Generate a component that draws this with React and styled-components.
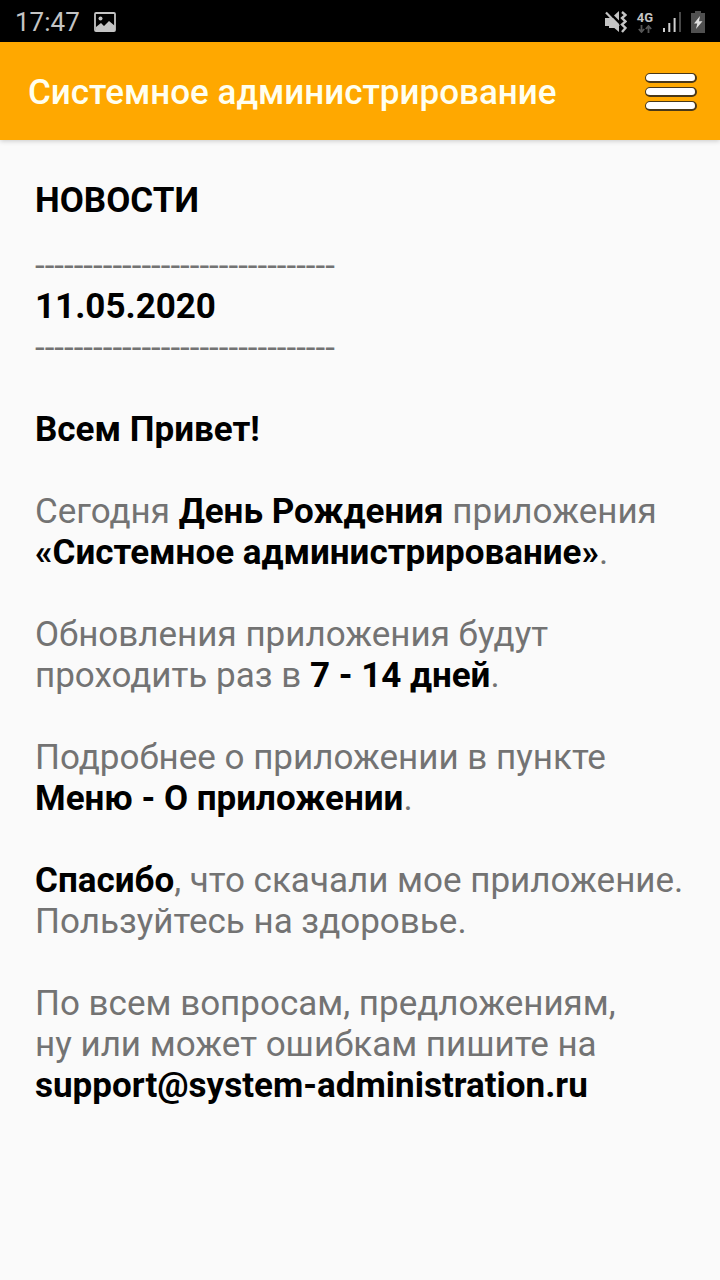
import React from "react";
import styled, { createGlobalStyle } from "styled-components";

const DIVIDER = "-".repeat(31);

const App = () => {
  return (
    <>
      <GlobalStyle />
      <StatusBar>
        <StatusGroup>
          <Clock>17:47</Clock>
          <PictureIcon />
        </StatusGroup>
        <StatusGroup>
          <MuteIcon />
          <NetworkIcon />
          <SignalIcon />
          <BatteryIcon />
        </StatusGroup>
      </StatusBar>
      <Header>
        <Title>Системное администрирование</Title>
        <MenuButton type="button" aria-label="Меню">
          <MenuLine />
          <MenuLine />
          <MenuLine />
        </MenuButton>
      </Header>
      <Content>
        <Heading>НОВОСТИ</Heading>
        <DateBlock>
          <div>{DIVIDER}</div>
          <strong>11.05.2020</strong>
          <div>{DIVIDER}</div>
        </DateBlock>
        <Text>
          <strong>Всем Привет!</strong>
        </Text>
        <Text>
          Сегодня <strong>День Рождения</strong> приложения
          <br />
          <strong>«Системное администрирование»</strong>.
        </Text>
        <Text>
          Обновления приложения будут
          <br />
          проходить раз в <strong>7 - 14 дней</strong>.
        </Text>
        <Text>
          Подробнее о приложении в пункте
          <br />
          <strong>Меню - О приложении</strong>.
        </Text>
        <Text>
          <strong>Спасибо</strong>, что скачали мое приложение.
          <br />
          Пользуйтесь на здоровье.
        </Text>
        <Text>
          По всем вопросам, предложениям,
          <br />
          ну или может ошибкам пишите на
          <br />
          <MailLink href="mailto:support@system-administration.ru">
            support@system-administration.ru
          </MailLink>
        </Text>
      </Content>
    </>
  );
};

export default App;

const PictureIcon = () => (
  <svg width="22" height="20" viewBox="0 0 22 20" aria-hidden="true">
    <rect x="1" y="1" width="20" height="18" rx="1" fill="none" stroke="#c4c4c4" strokeWidth="1.8" />
    <circle cx="6.5" cy="6.5" r="2" fill="#c4c4c4" />
    <path d="M2 15l5-4 3 3 5-5 6 5v5H2z" fill="#c4c4c4" />
  </svg>
);

const MuteIcon = () => (
  <svg width="22" height="22" viewBox="0 0 22 22" aria-hidden="true">
    <path d="M0 7h4l10 9v5l-7-6H0z" fill="#c4c4c4" />
    <path d="M1 1.500l13 13.500" stroke="#c4c4c4" strokeWidth="2.200" />
    <path d="M4 7h4l6 6v4H4z" fill="#c4c4c4" />
    <path d="M9 4.500L14 0v9.500z" fill="#c4c4c4" />
    <path d="M17 1l3.500 3-3.500 3 3.500 3.500-3.500 3 3.500 3.500-3.500 4" fill="none" stroke="#c4c4c4" strokeWidth="2.400" />
  </svg>
);

const NetworkIcon = () => (
  <Network>
    <span>4G</span>
    <svg width="14" height="8" viewBox="0 0 14 8" aria-hidden="true">
      <path
        d="M3.500 0v7M.800 4l2.700 3 2.700-3M10.500 8V1M7.800 4l2.700-3 2.700 3"
        fill="none"
        stroke="#555"
        strokeWidth="1.800"
      />
    </svg>
  </Network>
);

const SignalIcon = () => (
  <svg width="18" height="20" viewBox="0 0 18 20" aria-hidden="true">
    <path d="M1 16v4M6.300 11v9M11.600 6v14" stroke="#d0d0d0" strokeWidth="2" />
    <path d="M17 0v20" stroke="#484848" strokeWidth="2" />
  </svg>
);

const BatteryIcon = () => (
  <svg width="14" height="22" viewBox="0 0 14 22" aria-hidden="true">
    <path d="M4 0h6v2h4v20H0V2h4z" fill="#505050" />
    <path d="M9 5L3 12.500h3.300L5 18l6.500-7.800H8z" fill="#e0e0e0" />
  </svg>
);

const GlobalStyle = createGlobalStyle`
  * {
    box-sizing: border-box;
  }
  body {
    margin: 0;
    background: #fafafa;
    color: #737373;
    font-family: Roboto, "Noto Sans", sans-serif;
  }
  strong {
    color: #000;
    font-weight: 700;
  }
`;

const StatusBar = styled.div`
  display: flex;
  align-items: center;
  justify-content: space-between;
  height: 42px;
  padding: 2px 15px 0;
  background: #000;
  color: #c4c4c4;
`;

const StatusGroup = styled.div`
  display: flex;
  align-items: center;
  gap: 10px;
`;

const Clock = styled.time`
  font-size: 26px;
  line-height: 30px;
  margin-right: 4px;
`;

const Network = styled.div`
  display: flex;
  flex-direction: column;
  align-items: center;
  gap: 1px;
  font-size: 13px;
  font-weight: 700;
  line-height: 13px;
`;

const Header = styled.header`
  display: flex;
  align-items: center;
  justify-content: space-between;
  height: 98px;
  padding: 2px 23px 0 28px;
  background: #ffa800;
  box-shadow: 0 1px 5px rgba(0, 0, 0, 0.2);
`;

const Title = styled.h1`
  margin: 0;
  color: #fffff0;
  font-size: 35px;
  font-weight: 500;
  line-height: 41px;
`;

const MenuButton = styled.button`
  display: flex;
  flex-direction: column;
  gap: 4px;
  padding: 0;
  border: 0;
  background: none;
`;

const MenuLine = styled.span`
  width: 52px;
  height: 10px;
  border: 1px solid #4a3818;
  border-right-width: 2px;
  border-bottom-width: 2px;
  border-radius: 5px;
  background: #fff;
`;

const Content = styled.main`
  padding: 40px 28px 41px 35px;
  font-size: 35px;
  line-height: 41px;
`;

const Heading = styled.h2`
  margin: 0 0 24px;
  color: #000;
  font-size: 35px;
  font-weight: 700;
`;

const DateBlock = styled.div`
  margin-bottom: 41px;
`;

const Text = styled.p`
  margin: 0 0 41px;
`;

const MailLink = styled.a`
  color: #000;
  font-weight: 700;
  text-decoration: none;
`;
